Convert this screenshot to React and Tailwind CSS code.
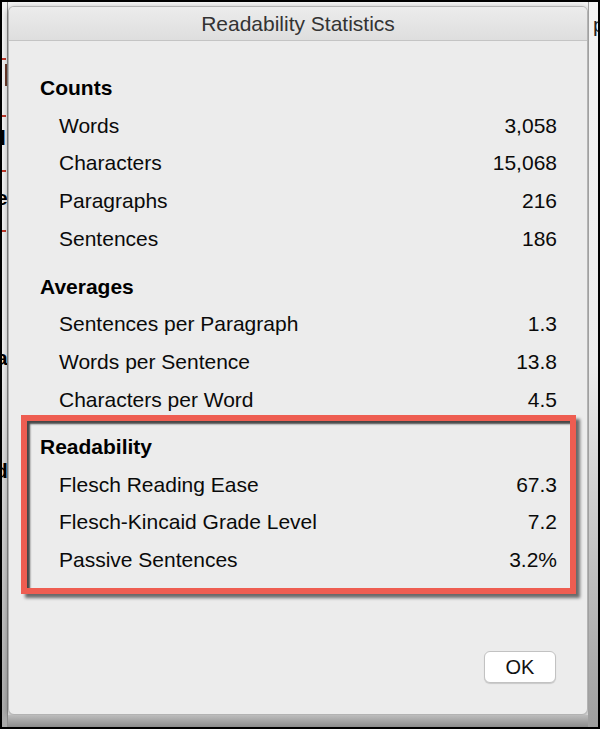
export default function App() {
  const sections = [
    {
      title: "Counts",
      rows: [
        ["Words", "3,058"],
        ["Characters", "15,068"],
        ["Paragraphs", "216"],
        ["Sentences", "186"],
      ],
    },
    {
      title: "Averages",
      rows: [
        ["Sentences per Paragraph", "1.3"],
        ["Words per Sentence", "13.8"],
        ["Characters per Word", "4.5"],
      ],
    },
  ];

  const readability = [
    ["Flesch Reading Ease", "67.3"],
    ["Flesch-Kincaid Grade Level", "7.2"],
    ["Passive Sentences", "3.2%"],
  ];

  const Row = ({ label, value }) => (
    <div className="h-[37.6px] pl-[19px] flex items-center justify-between text-[#0a0a0a]">
      <span>{label}</span>
      <span>{value}</span>
    </div>
  );

  return (
    <div className="w-[600px] h-[729px] box-border border-2 border-black bg-[#f1f1f1] flex overflow-hidden font-['Liberation_Sans',Arial,sans-serif] text-[21px] leading-none">
      {/* document behind, left edge */}
      <div className="w-[6px] shrink-0 flex flex-col overflow-hidden border-r border-[#8f8f8f] bg-gradient-to-b from-[#f3f3f3] via-[#ededed] to-[#a9a9a9]">
        <div className="h-[56px] shrink-0" />
        <div className="h-[2px] w-[4px] bg-[#c0392b] shrink-0" />
        <div className="h-[4px] shrink-0" />
        <div className="h-[22px] w-[2px] ml-[3px] bg-[#6b3a2a] shrink-0" />
        <div className="h-[29px] shrink-0" />
        <div className="h-[2px] w-[4px] bg-[#c0392b] shrink-0" />
        <div className="h-[10px] shrink-0" />
        <div className="-ml-[9px] font-bold text-black shrink-0">tl</div>
        <div className="h-[22px] shrink-0" />
        <div className="h-[2px] w-[4px] bg-[#c0392b] shrink-0" />
        <div className="h-[15px] shrink-0" />
        <div className="-ml-[6px] font-bold text-black shrink-0">e</div>
        <div className="h-[22px] shrink-0" />
        <div className="h-[2px] w-[4px] bg-[#c0392b] shrink-0" />
        <div className="h-[115px] shrink-0" />
        <div className="-ml-[6px] font-bold text-black shrink-0">a</div>
        <div className="h-[92px] shrink-0" />
        <div className="-ml-[7px] font-bold text-black shrink-0">d</div>
      </div>

      {/* dialog column */}
      <div className="w-[580px] shrink-0 flex flex-col">
        <div className="h-[4px] shrink-0 bg-[#f4f4f4]" />
        <div className="h-[709px] shrink-0 flex flex-col rounded-[6px] border border-[#b3b3b3] bg-[#ececec] overflow-hidden shadow-[0_2px_6px_rgba(0,0,0,0.35)]">
          <div className="h-[34px] shrink-0 flex items-center justify-center border-b border-[#c4c4c4] bg-gradient-to-b from-[#ececec] to-[#dedede] text-[#333]">
            Readability Statistics
          </div>
          <div className="flex-1 flex flex-col pt-[28px] pl-[31px] pr-[30px]">
            {sections.map((s, i) => (
              <div key={s.title} className={i > 0 ? "mt-[10.5px]" : ""}>
                <div className="h-[37.6px] flex items-center font-bold text-black">
                  {s.title}
                </div>
                {s.rows.map(([l, v]) => (
                  <Row key={l} label={l} value={v} />
                ))}
              </div>
            ))}

            <div className="-mt-[3px] -mx-[19px] border-[6px] border-[#ee5d51] px-[13px] pt-[7px] pb-[10px] shadow-[inset_3px_3px_2px_rgba(0,0,0,0.7),4px_4px_3px_rgba(0,0,0,0.55)]">
              <div className="h-[37.6px] flex items-center font-bold text-black">
                Readability
              </div>
              {readability.map(([l, v]) => (
                <Row key={l} label={l} value={v} />
              ))}
            </div>

            <div className="mt-[57px] flex justify-end pr-[1px]">
              <button className="w-[72px] h-[32px] rounded-[6px] bg-white border border-[#c2c2c2] shadow-[0_1px_1px_rgba(0,0,0,0.15)] text-[20px] text-[#111] flex items-center justify-center">
                OK
              </button>
            </div>
          </div>
        </div>
        <div className="flex-1 bg-gradient-to-b from-[#bdbdbd] to-[#8c8c8c]" />
      </div>

      {/* document behind, right edge */}
      <div className="flex-1 flex flex-col overflow-hidden border-l border-[#a0a0a0] bg-gradient-to-b from-[#f3f3f3] via-[#ececec] to-[#9e9e9e]">
        <div className="h-[12px] shrink-0" />
        <div className="ml-[4px] text-[#222] shrink-0">p</div>
      </div>
    </div>
  );
}
